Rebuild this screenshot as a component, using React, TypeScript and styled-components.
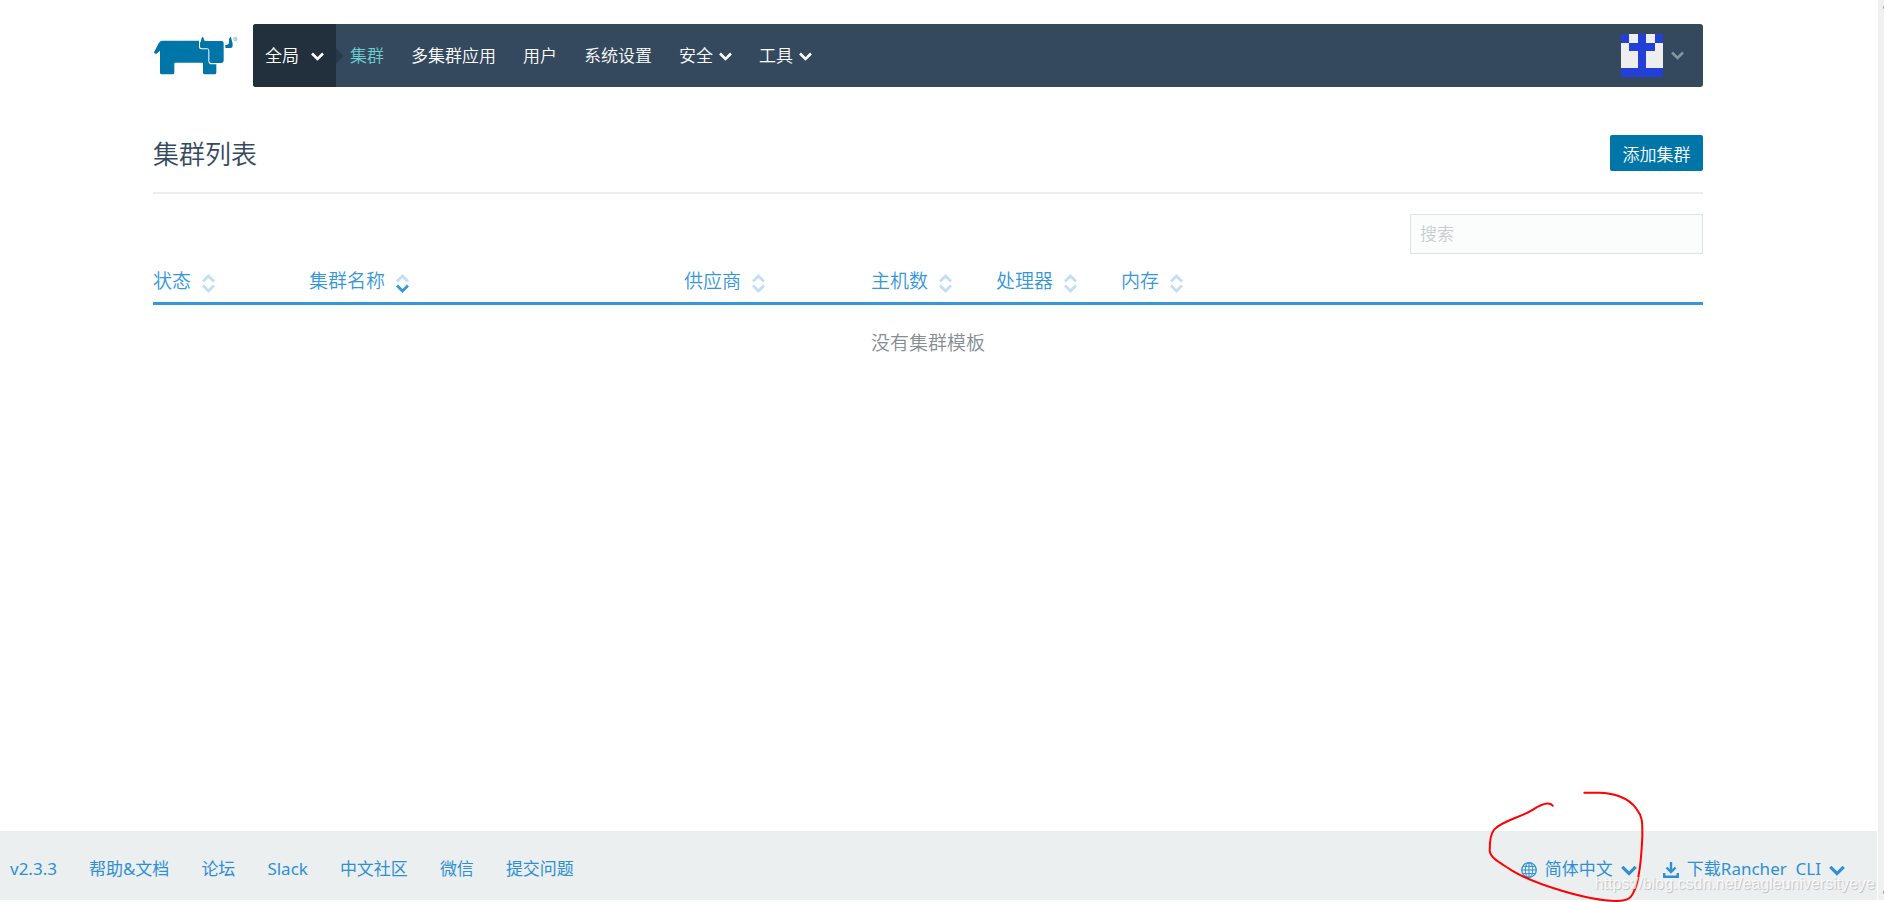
import React from "react";
import styled, { createGlobalStyle } from "styled-components";

const colors = {
  nav: "#34495e",
  navDark: "#22303d",
  navArrow: "#293a4a",
  active: "#6ecbce",
  primary: "#0075a8",
  link: "#3497da",
  footerLink: "#2f8fd3",
  footer: "#ebeff0",
  muted: "#868d94",
};

const GlobalStyle = createGlobalStyle`
  *, *::before, *::after { box-sizing: border-box; }
  body {
    margin: 0;
    background: #fff;
    color: #34495e;
    font-family: "Noto Sans", "Noto Sans CJK SC", sans-serif;
    font-size: 17px;
    font-weight: 350;
    line-height: 24px;
  }
  button, input { font: inherit; }
`;

const Shell = styled.div`
  display: flex;
  min-height: 100vh;
  padding-bottom: 2px;
`;

const Page = styled.div`
  position: relative;
  flex: 1;
  min-width: 0;
  display: flex;
  flex-direction: column;
`;

const ScrollRail = styled.div`
  width: 6px;
  margin-left: 1px;
  padding: 6px 0;
  display: flex;
  flex-direction: column;
  align-items: flex-end;
  justify-content: space-between;
  background: #f0f0f0;
`;

const RailMark = styled.span`
  width: 1px;
  height: 3px;
  background: #a8a8a8;
`;

const Content = styled.div`
  flex: 1;
  padding: 24px 174px 0 153px;
  @media (max-width: 1400px) {
    padding-left: 24px;
    padding-right: 24px;
  }
`;

const Header = styled.header`
  display: flex;
  height: 63px;
`;

const LogoLink = styled.a`
  width: 100px;
  flex: none;
  padding: 12px 0 0 1px;
  svg { display: block; }
`;

const NavBar = styled.nav`
  flex: 1;
  display: flex;
  align-items: stretch;
  background: ${colors.nav};
  border-radius: 3px;
`;

const ScopeButton = styled.button`
  width: 83px;
  padding: 0 12px;
  border: 0;
  border-radius: 3px 0 0 3px;
  display: flex;
  align-items: center;
  justify-content: space-between;
  white-space: nowrap;
  background: ${colors.navDark};
  color: #fff;
  svg { margin-top: 2px; }
`;

const ScopeArrow = styled.span`
  align-self: center;
  border: solid transparent;
  border-width: 8px 0 8px 7px;
  border-left-color: ${colors.navArrow};
`;

const NavList = styled.ul`
  flex: 1;
  margin: 0;
  padding: 0 0 0 7px;
  display: flex;
  align-items: center;
  gap: 27px;
  list-style: none;
`;

const NavLink = styled.a<{ $active?: boolean }>`
  color: ${(p) => (p.$active ? colors.active : "#fff")};
  text-decoration: none;
  white-space: nowrap;
`;

const NavMenu = styled.button`
  padding: 0;
  border: 0;
  display: flex;
  align-items: center;
  gap: 6px;
  background: none;
  color: #fff;
  white-space: nowrap;
  svg { margin-top: 2px; }
`;

const UserButton = styled(NavMenu)`
  gap: 8px;
  padding-right: 19px;
  color: #8494a2;
  svg { margin-top: 0; }
`;

const TitleRow = styled.div`
  margin-top: 40px;
  height: 67px;
  display: flex;
  align-items: flex-start;
  justify-content: space-between;
  padding-top: 8px;
  border-bottom: 2px solid ${colors.footer};
`;

const Title = styled.h1`
  margin: 0;
  font-size: 26px;
  line-height: 38px;
  font-weight: 350;
`;

const PrimaryButton = styled.button`
  min-width: 93px;
  height: 36px;
  padding: 3px 12px 0;
  border: 0;
  border-radius: 2px;
  background: ${colors.primary};
  color: #fff;
`;

const SearchRow = styled.div`
  display: flex;
  justify-content: flex-end;
  padding-top: 20px;
`;

const SearchInput = styled.input`
  width: 293px;
  height: 40px;
  padding: 0 9px 2px;
  border: 1px solid #dce4e4;
  border-radius: 0;
  background: #fbfdfc;
  &::placeholder { color: #c9cdd0; opacity: 1; }
`;

const Table = styled.table`
  width: 100%;
  table-layout: fixed;
  border-collapse: separate;
  border-spacing: 0;
  font-size: 19px;
`;

const HeadCell = styled.th<{ $width?: number }>`
  width: ${(p) => (p.$width ? p.$width + "px" : "auto")};
  height: 51px;
  padding: 6px 0 0;
  border-bottom: 3px solid ${colors.link};
  font-weight: 350;
  text-align: left;
`;

const SortButton = styled.button`
  padding: 0;
  border: 0;
  display: flex;
  align-items: center;
  gap: 11px;
  background: none;
  color: ${colors.link};
  white-space: nowrap;
  svg { margin-top: 4px; }
`;

const EmptyCell = styled.td`
  height: 75px;
  padding: 0;
  text-align: center;
  color: ${colors.muted};
`;

const Footer = styled.footer`
  height: 69px;
  padding: 7px 32px 0 10px;
  display: flex;
  align-items: center;
  justify-content: space-between;
  background: ${colors.footer};
  font-family: "Noto Sans", "Noto Sans CJK SC", sans-serif;
  font-weight: 400;
`;

const FooterGroup = styled.div<{ $gap: number }>`
  display: flex;
  align-items: center;
  gap: ${(p) => p.$gap}px;
`;

const FooterLink = styled.a`
  color: ${colors.footerLink};
  text-decoration: none;
  white-space: nowrap;
`;

const FooterMenu = styled(NavMenu)`
  gap: 8px;
  color: ${colors.footerLink};
`;

const Annotation = styled.svg`
  position: absolute;
  right: 211px;
  bottom: -2px;
  pointer-events: none;
`;

const Watermark = styled.span`
  position: absolute;
  right: 2px;
  bottom: 4px;
  font-family: "Liberation Sans", sans-serif;
  font-size: 16px;
  font-weight: 400;
  color: rgba(255, 255, 255, 0.8);
  text-shadow: 1px 1px 1px rgba(0, 0, 0, 0.2);
  pointer-events: none;
`;

const Logo = () => (
  <svg width="84" height="39" viewBox="42 64 252 117" role="img" aria-label="Rancher">
    <g fill={colors.primary}>
      <path d="M67 78H177V97Q177 104 184 104H205V138Q205 149 216 149H229V174Q229 179 224 179H194Q189 179 189 174V146Q189 144 187 144H105Q103 144 103 146V174Q103 179 98 179H65Q60 179 60 174V108L50 117Q42 118 42 113L57 84Q61 78 67 78Z" />
      <path d="M187 66Q192 67 192 75Q193 79 198 79H245Q251 79 251 85V137Q251 145 243 145H216Q208 145 208 138V108Q208 101 201 101H185Q180 101 180 95V84Q184 80 184 73Z" />
      <path d="M271 66Q274 66 275 76Q279 86 278 93Q278 100 271 100H256V91H261Q267 90 267 83V73Z" />
    </g>
    <circle cx="286" cy="73" r="5" fill="none" stroke={colors.primary} strokeWidth="2" opacity="0.6" />
    <circle cx="286" cy="73" r="2" fill={colors.primary} opacity="0.6" />
  </svg>
);

const Chevron = ({ width = 13 }: { width?: number }) => (
  <svg width={width} height={width === 13 ? 9 : 11} viewBox="0 0 13 9" aria-hidden="true">
    <path d="M1 1.5L6.5 7L12 1.5" fill="none" stroke="currentColor" strokeWidth="2.6" />
  </svg>
);

const SortIcon = ({ sorted }: { sorted?: boolean }) => (
  <svg width="13" height="19" viewBox="0 0 13 19" fill="none" strokeWidth="2.8" aria-hidden="true">
    <path d="M1 7.5L6.5 2L12 7.5" stroke="#c2dff4" />
    <path d="M1 11.5L6.5 17L12 11.5" stroke={sorted ? colors.link : "#c2dff4"} />
  </svg>
);

const Avatar = () => (
  <svg width="42" height="43" viewBox="0 0 5 5" preserveAspectRatio="none" shapeRendering="crispEdges" aria-hidden="true">
    <path d="M0 0H5V5H0Z" fill="#eee" />
    <path d="M0 0H1V1H2V0H3V1H4V0H5V1H4V2H3V4H5V5H0V4H2V2H1V1H0Z" fill="#243fd6" />
  </svg>
);

const Globe = () => (
  <svg width="16" height="16" viewBox="0 0 16 16" fill="none" stroke="currentColor" aria-hidden="true">
    <circle cx="8" cy="8" r="7.3" strokeWidth="1.3" />
    <ellipse cx="8" cy="8" rx="3.7" ry="7.3" />
    <path d="M8 .7V15.3M.7 8H15.3M1.8 4.4H14.2M1.8 11.6H14.2" />
  </svg>
);

const Download = () => (
  <svg width="16" height="16" viewBox="0 0 16 16" fill="none" stroke="currentColor" strokeWidth="2.4" aria-hidden="true">
    <path d="M8 0V9M3.5 5.5L8 10L12.5 5.5" />
    <path d="M1.2 11V14.8H14.8V11" />
  </svg>
);

const columns = [
  { label: "状态", width: 156 },
  { label: "集群名称", width: 375, sorted: true },
  { label: "供应商", width: 187 },
  { label: "主机数", width: 125 },
  { label: "处理器", width: 125 },
  { label: "内存" },
];

const footerLinks = ["v2.3.3", "帮助&文档", "论坛", "Slack", "中文社区", "微信", "提交问题"];

export default function App() {
  return (
    <>
      <GlobalStyle />
      <Shell>
        <Page>
          <Content>
            <Header>
              <LogoLink href="#"><Logo /></LogoLink>
              <NavBar>
                <ScopeButton type="button">全局<Chevron /></ScopeButton>
                <ScopeArrow />
                <NavList>
                  <li><NavLink href="#" $active>集群</NavLink></li>
                  <li><NavLink href="#">多集群应用</NavLink></li>
                  <li><NavLink href="#">用户</NavLink></li>
                  <li><NavLink href="#">系统设置</NavLink></li>
                  <li><NavMenu type="button">安全<Chevron /></NavMenu></li>
                  <li><NavMenu type="button">工具<Chevron /></NavMenu></li>
                </NavList>
                <UserButton type="button" aria-label="用户菜单"><Avatar /><Chevron /></UserButton>
              </NavBar>
            </Header>
            <main>
              <TitleRow>
                <Title>集群列表</Title>
                <PrimaryButton type="button">添加集群</PrimaryButton>
              </TitleRow>
              <SearchRow>
                <SearchInput type="search" placeholder="搜索" aria-label="搜索" />
              </SearchRow>
              <Table>
                <thead>
                  <tr>
                    {columns.map((c) => (
                      <HeadCell key={c.label} $width={c.width} scope="col">
                        <SortButton type="button">{c.label}<SortIcon sorted={c.sorted} /></SortButton>
                      </HeadCell>
                    ))}
                  </tr>
                </thead>
                <tbody>
                  <tr><EmptyCell colSpan={columns.length}>没有集群模板</EmptyCell></tr>
                </tbody>
              </Table>
            </main>
          </Content>
          <Footer>
            <FooterGroup $gap={32}>
              {footerLinks.map((label) => <FooterLink key={label} href="#">{label}</FooterLink>)}
            </FooterGroup>
            <FooterGroup $gap={26}>
              <FooterMenu type="button"><Globe />简体中文<Chevron width={16} /></FooterMenu>
              <FooterMenu type="button"><Download />{"下载Rancher\u00a0 CLI"}<Chevron width={16} /></FooterMenu>
            </FooterGroup>
          </Footer>
          <Annotation width="196" height="122" viewBox="0 0 588 366" fill="none" stroke="#f00" strokeWidth="6" strokeLinecap="round" aria-hidden="true">
            <path d="M248 77C238 65 217 71 189 89C158 110 101 120 73 148C61 161 59 181 59 212C61 236 94 250 125 271C190 311 350 362 440 363C474 362 486 358 499 315C513 270 514 220 517 170C517 128 519 112 499 86C475 52 425 37 384 38H343" />
          </Annotation>
          <Watermark>https://blog.csdn.net/eagleuniversityeye</Watermark>
        </Page>
        <ScrollRail aria-hidden="true"><RailMark /><RailMark /></ScrollRail>
      </Shell>
    </>
  );
}
